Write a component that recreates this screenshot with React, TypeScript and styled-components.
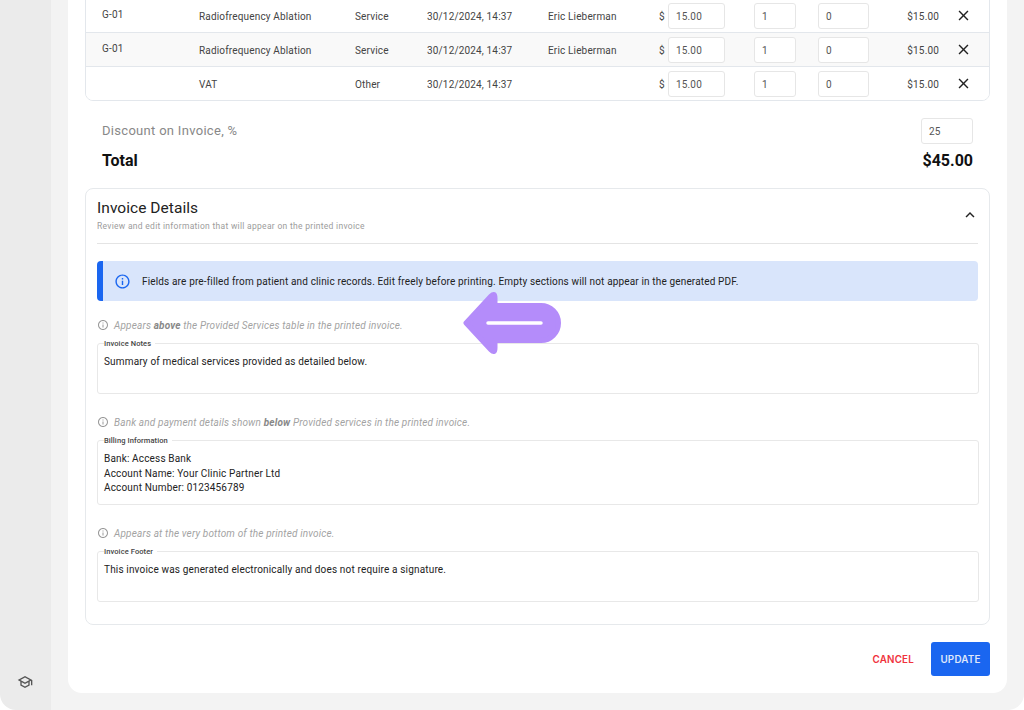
import React from "react";
import styled, { createGlobalStyle } from "styled-components";
import { MdClose, MdInfoOutline, MdKeyboardArrowUp, MdOutlineSchool } from "react-icons/md";

const Global = createGlobalStyle`
  html, body { margin: 0; padding: 0; background: #fff; }
  body { font-family: Roboto, "Liberation Sans", sans-serif; color: #222; }
  * { box-sizing: border-box; }
`;

const Shell = styled.div`
  position: relative;
  display: flex;
  width: 1024px;
  height: 710px;
  overflow: hidden;
  border-radius: 0 0 16px 16px;
`;
const Sidebar = styled.aside`
  width: 51px;
  flex: none;
  background: #ebebeb;
  display: flex;
  flex-direction: column;
  align-items: center;
  justify-content: flex-end;
  padding: 0 1px 20px 0;
  color: #555;
  font-size: 16px;
`;
const Main = styled.main`
  flex: 1;
  min-width: 0;
  background: #f3f3f3;
  padding: 0 17px 17px;
  display: flex;
`;
const Panel = styled.section`
  flex: 1;
  min-width: 0;
  background: #fff;
  border-radius: 0 0 14px 14px;
  padding: 0 17px;
  display: flex;
  flex-direction: column;
`;
const Table = styled.div`
  margin-top: -2px;
  border: 1px solid #e3e7ec;
  border-radius: 0 0 8px 8px;
  overflow: hidden;
`;
const Row = styled.div<{ $alt?: boolean; $last?: boolean }>`
  height: ${(p) => (p.$last ? 33 : 34)}px;
  display: grid;
  grid-template-columns: 113px 156px 72px 121px 111px 9px 57px 29px 42px 22px 51px 70px 1fr;
  align-items: center;
  background: ${(p) => (p.$alt ? "#f9f9f9" : "#fff")};
  border-bottom: ${(p) => (p.$last ? "none" : "1px solid #e3e7ec")};
  font-size: 10px;
  color: #444;
  letter-spacing: 0.16px;
`;
const Cell = styled.div`
  padding-top: 1px;
`;
const CodeCell = styled.div`
  padding: 0 0 2px 16px;
`;
const Amount = styled.div`
  text-align: right;
  padding-top: 1px;
`;
const Field = styled.div`
  height: 26px;
  border: 1px solid #e6e6e6;
  border-radius: 3px;
  background: #fff;
  padding: 1px 0 0 7px;
  display: flex;
  align-items: center;
  font-size: 10px;
  letter-spacing: 0.16px;
  color: #555;
`;
const Gap = styled.div``;
const Remove = styled.div`
  display: flex;
  justify-content: center;
  color: #222;
  font-size: 17px;
  padding-right: 1px;
`;
const Summary = styled.div`
  display: grid;
  grid-template-columns: 1fr 52px;
  align-items: center;
  padding: 17px 17px 0;
  row-gap: 6px;
`;
const DiscountLabel = styled.div`
  font-size: 13px;
  color: #888;
  letter-spacing: 0.3px;
  padding-bottom: 1px;
`;
const TotalLabel = styled.div`
  font-size: 16px;
  font-weight: 700;
  color: #111;
  line-height: 21px;
`;
const TotalValue = styled.div`
  font-size: 16px;
  font-weight: 700;
  color: #111;
  line-height: 21px;
  text-align: right;
  white-space: nowrap;
  justify-self: end;
`;
const Card = styled.div`
  margin-top: 17px;
  height: 437px;
  border: 1px solid #e6e9ec;
  border-radius: 8px;
  padding: 0 11px;
`;
const CardHead = styled.header`
  height: 55px;
  border-bottom: 1px solid #e4e4e4;
  display: flex;
  justify-content: space-between;
  padding-top: 10px;
`;
const CardTitle = styled.h2`
  margin: 0;
  font-size: 15.5px;
  font-weight: 400;
  line-height: 19px;
  color: #222;
  letter-spacing: 0.05px;
`;
const CardSub = styled.p`
  margin: 2px 0 0;
  font-size: 8.5px;
  line-height: 12px;
  color: #9c9c9c;
  letter-spacing: 0.29px;
`;
const Toggle = styled.div`
  font-size: 18px;
  color: #222;
  padding: 7px 0 0;
  margin-right: -1px;
`;
const Alert = styled.div`
  margin-top: 17px;
  height: 40px;
  background: #d9e5fb;
  border-left: 6px solid #1a66f0;
  border-radius: 4px;
  display: flex;
  align-items: center;
  gap: 11px;
  padding-left: 11px;
  font-size: 10px;
  letter-spacing: 0.15px;
  color: #222;
`;
const AlertIcon = styled.span`
  display: flex;
  color: #1a66f0;
  font-size: 17px;
`;
const Hint = styled.div<{ $top: number }>`
  margin-top: ${(p) => p.$top}px;
  height: 14px;
  display: flex;
  align-items: center;
  gap: 5px;
  font-size: 10px;
  font-style: italic;
  color: #a3a3a3;
  letter-spacing: 0.16px;
  b { color: #888; font-weight: 700; }
  svg { font-size: 12px; color: #999; flex: none; }
`;
const Fieldset = styled.fieldset<{ $h: number }>`
  margin: 7px -1px 0 0;
  height: ${(p) => p.$h}px;
  border: 1px solid #e8e8e8;
  border-radius: 3px;
  padding: 7.4px 6px 0;
  min-width: 0;
  legend {
    font-size: 7.5px;
    font-weight: 500;
    color: #444;
    padding: 0 4px 0 0;
    line-height: 9px;
    letter-spacing: 0.1px;
  }
`;
const FieldText = styled.div`
  font-size: 10px;
  line-height: 14.4px;
  color: #222;
  letter-spacing: 0.16px;
  white-space: pre-line;
`;
const Actions = styled.footer`
  margin-top: 17px;
  display: flex;
  justify-content: flex-end;
  align-items: center;
  gap: 17px;
`;
const Cancel = styled.button`
  border: 0;
  background: none;
  padding: 0;
  font: 600 9.8px Inter, Roboto, sans-serif;
  letter-spacing: 0.2px;
  color: #f0323c;
`;
const Update = styled.button`
  width: 59px;
  height: 34px;
  border: 0;
  border-radius: 3px;
  background: #1a66f0;
  font: 600 9.8px Inter, Roboto, sans-serif;
  letter-spacing: 0.2px;
  color: #dfe7fb;
`;
const Annotation = styled.svg`
  position: absolute;
  left: 460px;
  top: 289px;
  width: 104px;
  height: 70px;
`;

type Line = { code: string; name: string; type: string; person: string; alt?: boolean; last?: boolean };
const lines: Line[] = [
  { code: "G-01", name: "Radiofrequency Ablation", type: "Service", person: "Eric Lieberman" },
  { code: "G-01", name: "Radiofrequency Ablation", type: "Service", person: "Eric Lieberman", alt: true },
  { code: "", name: "VAT", type: "Other", person: "", last: true },
];

const Note = ({ top, children }: { top: number; children: React.ReactNode }) => (
  <Hint $top={top}>
    <MdInfoOutline />
    <span>{children}</span>
  </Hint>
);

export default function App() {
  return (
    <>
      <Global />
      <Shell>
        <Sidebar>
          <MdOutlineSchool />
        </Sidebar>
        <Main>
          <Panel>
            <Table>
              {lines.map((l, i) => (
                <Row key={i} $alt={l.alt} $last={l.last}>
                  <CodeCell>{l.code}</CodeCell>
                  <Cell>{l.name}</Cell>
                  <Cell>{l.type}</Cell>
                  <Cell>30/12/2024, 14:37</Cell>
                  <Cell>{l.person}</Cell>
                  <Cell>$</Cell>
                  <Field>15.00</Field>
                  <Gap />
                  <Field>1</Field>
                  <Gap />
                  <Field>0</Field>
                  <Amount>$15.00</Amount>
                  <Remove>
                    <MdClose />
                  </Remove>
                </Row>
              ))}
            </Table>
            <Summary>
              <DiscountLabel>Discount on Invoice, %</DiscountLabel>
              <Field>25</Field>
              <TotalLabel>Total</TotalLabel>
              <TotalValue>$45.00</TotalValue>
            </Summary>
            <Card>
              <CardHead>
                <div>
                  <CardTitle>Invoice Details</CardTitle>
                  <CardSub>Review and edit information that will appear on the printed invoice</CardSub>
                </div>
                <Toggle>
                  <MdKeyboardArrowUp />
                </Toggle>
              </CardHead>
              <Alert>
                <AlertIcon>
                  <MdInfoOutline />
                </AlertIcon>
                Fields are pre-filled from patient and clinic records. Edit freely before printing. Empty sections will not appear in the generated PDF.
              </Alert>
              <Note top={17}>
                Appears <b>above</b> the Provided Services table in the printed invoice.
              </Note>
              <Fieldset $h={55}>
                <legend>Invoice Notes</legend>
                <FieldText>Summary of medical services provided as detailed below.</FieldText>
              </Fieldset>
              <Note top={21}>
                Bank and payment details shown <b>below</b> Provided services in the printed invoice.
              </Note>
              <Fieldset $h={69}>
                <legend>Billing Information</legend>
                <FieldText>{"Bank: Access Bank\nAccount Name: Your Clinic Partner Ltd\nAccount Number: 0123456789"}</FieldText>
              </Fieldset>
              <Note top={21}>Appears at the very bottom of the printed invoice.</Note>
              <Fieldset $h={55}>
                <legend>Invoice Footer</legend>
                <FieldText>This invoice was generated electronically and does not require a signature.</FieldText>
              </Fieldset>
            </Card>
            <Actions>
              <Cancel>CANCEL</Cancel>
              <Update>UPDATE</Update>
            </Actions>
          </Panel>
        </Main>
        <Annotation viewBox="0 0 104 70">
          <path
            d="M6 34 L31 7 Q35 3 35 9 V16.5 H81 A17.5 17.5 0 0 1 81 51.5 H35 V59 Q35 65 31 61 Z"
            fill="#b48cfa"
            stroke="#b48cfa"
            strokeWidth="5"
            strokeLinejoin="round"
          />
          <line x1="28" y1="34" x2="81" y2="34" stroke="#fff" strokeWidth="3.5" strokeLinecap="round" />
        </Annotation>
      </Shell>
    </>
  );
}
